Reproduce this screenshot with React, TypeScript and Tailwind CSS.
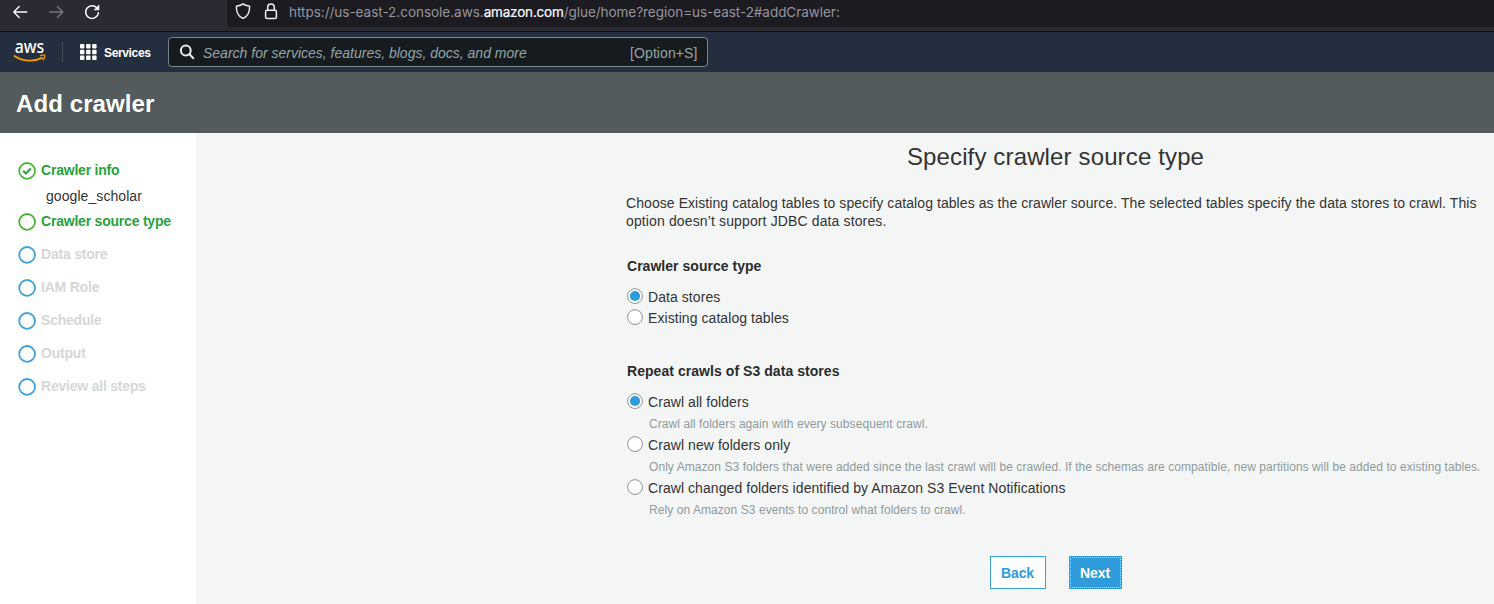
import type { ReactNode } from "react";

function BrowserBar() {
  return (
    <div className="flex h-8 shrink-0 items-start border-b border-[#0e0f14] bg-[#2b2a33]">
      <div className="flex h-6 w-[227px] shrink-0 items-center">
        <svg className="ml-3 h-4 w-4" viewBox="0 0 16 16" fill="none" stroke="#fbfbfe" strokeWidth="1.4" strokeLinecap="round" strokeLinejoin="round">
          <path d="M14.800 8H1.800M7.200 2.600 1.800 8l5.400 5.400" />
        </svg>
        <svg className="ml-5 h-4 w-4" viewBox="0 0 16 16" fill="none" stroke="#77767e" strokeWidth="1.4" strokeLinecap="round" strokeLinejoin="round">
          <path d="M1.800 8h13M9.400 2.600 14.800 8l-5.400 5.400" />
        </svg>
        <svg className="ml-5 h-4 w-4" viewBox="0 0 16 16" fill="none" stroke="#fbfbfe" strokeWidth="1.5" strokeLinecap="round">
          <path d="M14.400 8.700A6.400 6.400 0 1 1 12.800 3.800" />
          <path d="M15 1.300V5.900H10.400z" fill="#fbfbfe" strokeWidth="0.6" strokeLinejoin="round" />
        </svg>
      </div>
      <div className="flex h-[27px] flex-1 items-start rounded-bl bg-[#1c1b22]">
        <svg className="mt-[3px] ml-2 h-4 w-4" viewBox="0 0 16 16" fill="none" stroke="#f0f0f4" strokeWidth="1.4" strokeLinejoin="round">
          <path d="M8 .9c1.500 1.300 4 2 6.600 2.300.2 5.500-1.400 10.200-6.600 12.300C2.800 13.400 1.200 8.700 1.400 3.200 4 2.900 6.500 2.200 8 .9z" />
        </svg>
        <svg className="mt-[3px] ml-3 h-[17px] w-4" viewBox="0 0 16 17" fill="none" stroke="#f0f0f4" strokeWidth="1.5">
          <rect x="2.600" y="7.300" width="10.800" height="8.200" rx="1.500" />
          <path d="M4.700 7.300V4.200a3.300 3.300 0 0 1 6.600 0v3.100" />
        </svg>
        <div className="ml-[10px] flex pt-[2px] font-['Inter','Liberation_Sans',sans-serif] text-[13.5px] leading-5 whitespace-nowrap text-[#96959d]">
          <span className="tracking-[-0.02px]">https://us-east-2.console.aws.</span>
          <span className="tracking-[-0.18px] text-[#fbfbfe] [-webkit-text-stroke:0.2px]">amazon.com</span>
          <span className="tracking-[-0.04px]">/glue/home?region=us-east-2#addCrawler:</span>
        </div>
      </div>
    </div>
  );
}

function AwsLogo() {
  return (
    <svg className="h-[34px] w-8 overflow-visible" viewBox="0 0 32 34">
      <text x="0.700" y="17.700" textLength="29.500" lengthAdjust="spacingAndGlyphs" fill="#fff" fontFamily="'Noto Sans', 'Open Sans', sans-serif" fontSize="18.500" fontWeight="500">
        aws
      </text>
      <path d="M.5 21c8.800 5.900 19.600 5.800 27.600 1.900" fill="none" stroke="#f90" strokeWidth="1.900" strokeLinecap="round" />
      <path d="M26.500 20.700c2-.8 3.900-.8 4.300-.3.400.6-.2 3-1.600 4.300" fill="none" stroke="#f90" strokeWidth="1.300" strokeLinecap="round" strokeLinejoin="round" />
    </svg>
  );
}

function NavBar() {
  return (
    <nav className="flex h-10 shrink-0 items-center bg-[#232f3e]">
      <div className="ml-[14px]">
        <AwsLogo />
      </div>
      <div className="ml-4 h-[22px] w-px bg-[#414750]" />
      <svg className="ml-[17px] h-4 w-[17px]" viewBox="0 0 17 16" fill="#fff">
        {[0, 6.1, 12.2].map((x) => [0, 5.8, 11.6].map((y) => <rect key={`${x}-${y}`} x={x} y={y} width="4.400" height="4.400" rx="0.800" />))}
      </svg>
      <span className="ml-[7px] w-[48px] pt-px text-xs leading-4 font-bold tracking-[-0.35px] text-white">Services</span>
      <div className="ml-4 flex h-[30px] w-[539.5px] items-center rounded-sm border border-[#77888c] bg-[#161b20]">
        <svg className="ml-[10px] h-4 w-4" viewBox="0 0 16 16" fill="none" stroke="#e9ebed" strokeWidth="2">
          <circle cx="6.800" cy="6.500" r="4.900" />
          <path d="m10.300 10 4 4.200" strokeLinecap="round" />
        </svg>
        <span className="ml-2 flex-1 pt-px text-sm text-[#95a5a6] italic">Search for services, features, blogs, docs, and more</span>
        <span className="mr-[9px] pt-px text-sm tracking-[0.09px] text-[#95a5a6]">[Option+S]</span>
      </div>
    </nav>
  );
}

type StepState = "done" | "current" | "pending";

function Step({ label, state, children }: { label: string; state: StepState; children?: ReactNode }) {
  const ring = state === "pending" ? "#3fa0dc" : "#4bb336";
  return (
    <li>
      <div className="flex items-start gap-[5px]">
        <svg className="mt-px h-[18px] w-[18px] shrink-0" viewBox="0 0 18 18" fill="none" stroke={ring}>
          <circle cx="9.100" cy="8.900" r="7.900" strokeWidth="1.800" />
          {state === "done" && <path d="m5.200 8.900 2.700 2.600 5-5" stroke="#2ea44a" strokeWidth="2.300" />}
        </svg>
        <span className={`text-sm leading-[18px] font-bold tracking-[-0.21px] ${state === "pending" ? "text-[#d5d8d8]" : "text-[#2aa13c]"}`}>
          {label}
        </span>
      </div>
      {children}
    </li>
  );
}

function Sidebar() {
  return (
    <aside className="w-[196px] shrink-0 bg-white pt-7 pl-[18px]">
      <ol className="flex flex-col gap-[14px]">
        <Step label="Crawler info" state="done">
          <div className="mt-[7px] -mb-[7px] ml-7 text-sm leading-[18px] tracking-[0.07px] text-[#333]">google_scholar</div>
        </Step>
        <Step label="Crawler source type" state="current" />
        {["Data store", "IAM Role", "Schedule", "Output", "Review all steps"].map((label) => (
          <Step key={label} label={label} state="pending" />
        ))}
      </ol>
    </aside>
  );
}

function Radio({ label, checked, hint }: { label: string; checked?: boolean; hint?: string }) {
  return (
    <div>
      <label className="flex items-start gap-[5px]">
        <svg className="h-4 w-4 shrink-0" viewBox="0 0 16 16">
          <circle cx="8" cy="8.100" r="7.400" fill="#fff" stroke="#8d9293" strokeWidth="1" />
          {checked && <circle cx="8" cy="8" r="5.100" fill="#2e9bda" />}
        </svg>
        <span className="text-sm leading-[18px] tracking-[0.065px] whitespace-nowrap text-[#333]">{label}</span>
      </label>
      {hint && <p className="mt-[5px] ml-[22px] text-xs leading-4 tracking-[0.066px] whitespace-nowrap text-[#8f9a9b]">{hint}</p>}
    </div>
  );
}

function CrawlerForm() {
  return (
    <main className="flex flex-1 justify-end bg-[#f4f6f6] pr-[9px]">
      <div className="w-[859px] pt-[10px]">
        <h2 className="text-center text-2xl leading-7 tracking-[0.14px] text-[#333]">Specify crawler source type</h2>
        <p className="mt-[23px] text-sm leading-[18px] tracking-[0.071px] text-[#333]">
          Choose Existing catalog tables to specify catalog tables as the crawler source. The selected tables specify the data stores to crawl. This
          <br />
          <span className="tracking-[0.13px]">option doesn’t support JDBC data stores.</span>
        </p>
        <section className="mt-[27px] ml-px">
          <h3 className="text-sm leading-[18px] font-bold tracking-[0.03px] text-[#2b2b2b]">Crawler source type</h3>
          <div className="mt-[13px] flex flex-col gap-[3px]">
            <Radio label="Data stores" checked />
            <Radio label="Existing catalog tables" />
          </div>
        </section>
        <section className="mt-[35px] ml-px">
          <h3 className="text-sm leading-[18px] font-bold tracking-[0.053px] text-[#2b2b2b]">Repeat crawls of S3 data stores</h3>
          <div className="mt-[13px] flex flex-col gap-1">
            <Radio label="Crawl all folders" checked hint="Crawl all folders again with every subsequent crawl." />
            <Radio
              label="Crawl new folders only"
              hint="Only Amazon S3 folders that were added since the last crawl will be crawled. If the schemas are compatible, new partitions will be added to existing tables."
            />
            <Radio
              label="Crawl changed folders identified by Amazon S3 Event Notifications"
              hint="Rely on Amazon S3 events to control what folders to crawl."
            />
          </div>
        </section>
        <div className="mt-[38px] flex justify-center gap-[23px]">
          <button className="h-[33px] w-14 border border-[#3a9fdc] bg-white text-sm font-bold tracking-[-0.1px] text-[#2e9bda]">Back</button>
          <button className="h-[33px] w-[53px] bg-[#2e9bda] text-sm font-bold tracking-[-0.08px] text-white outline-1 -outline-offset-2 outline-[#b5dbf2] outline-dotted">
            Next
          </button>
        </div>
      </div>
    </main>
  );
}

export default function App() {
  return (
    <div className="flex h-[604px] w-[1494px] flex-col overflow-hidden font-['Liberation_Sans',Arial,sans-serif]">
      <BrowserBar />
      <NavBar />
      <header className="flex h-[61px] shrink-0 items-center bg-[#535b5c] pt-[2px] pl-4">
        <h1 className="text-2xl leading-7 font-bold tracking-[0.1px] text-white">Add crawler</h1>
      </header>
      <div className="flex flex-1">
        <Sidebar />
        <CrawlerForm />
      </div>
    </div>
  );
}
